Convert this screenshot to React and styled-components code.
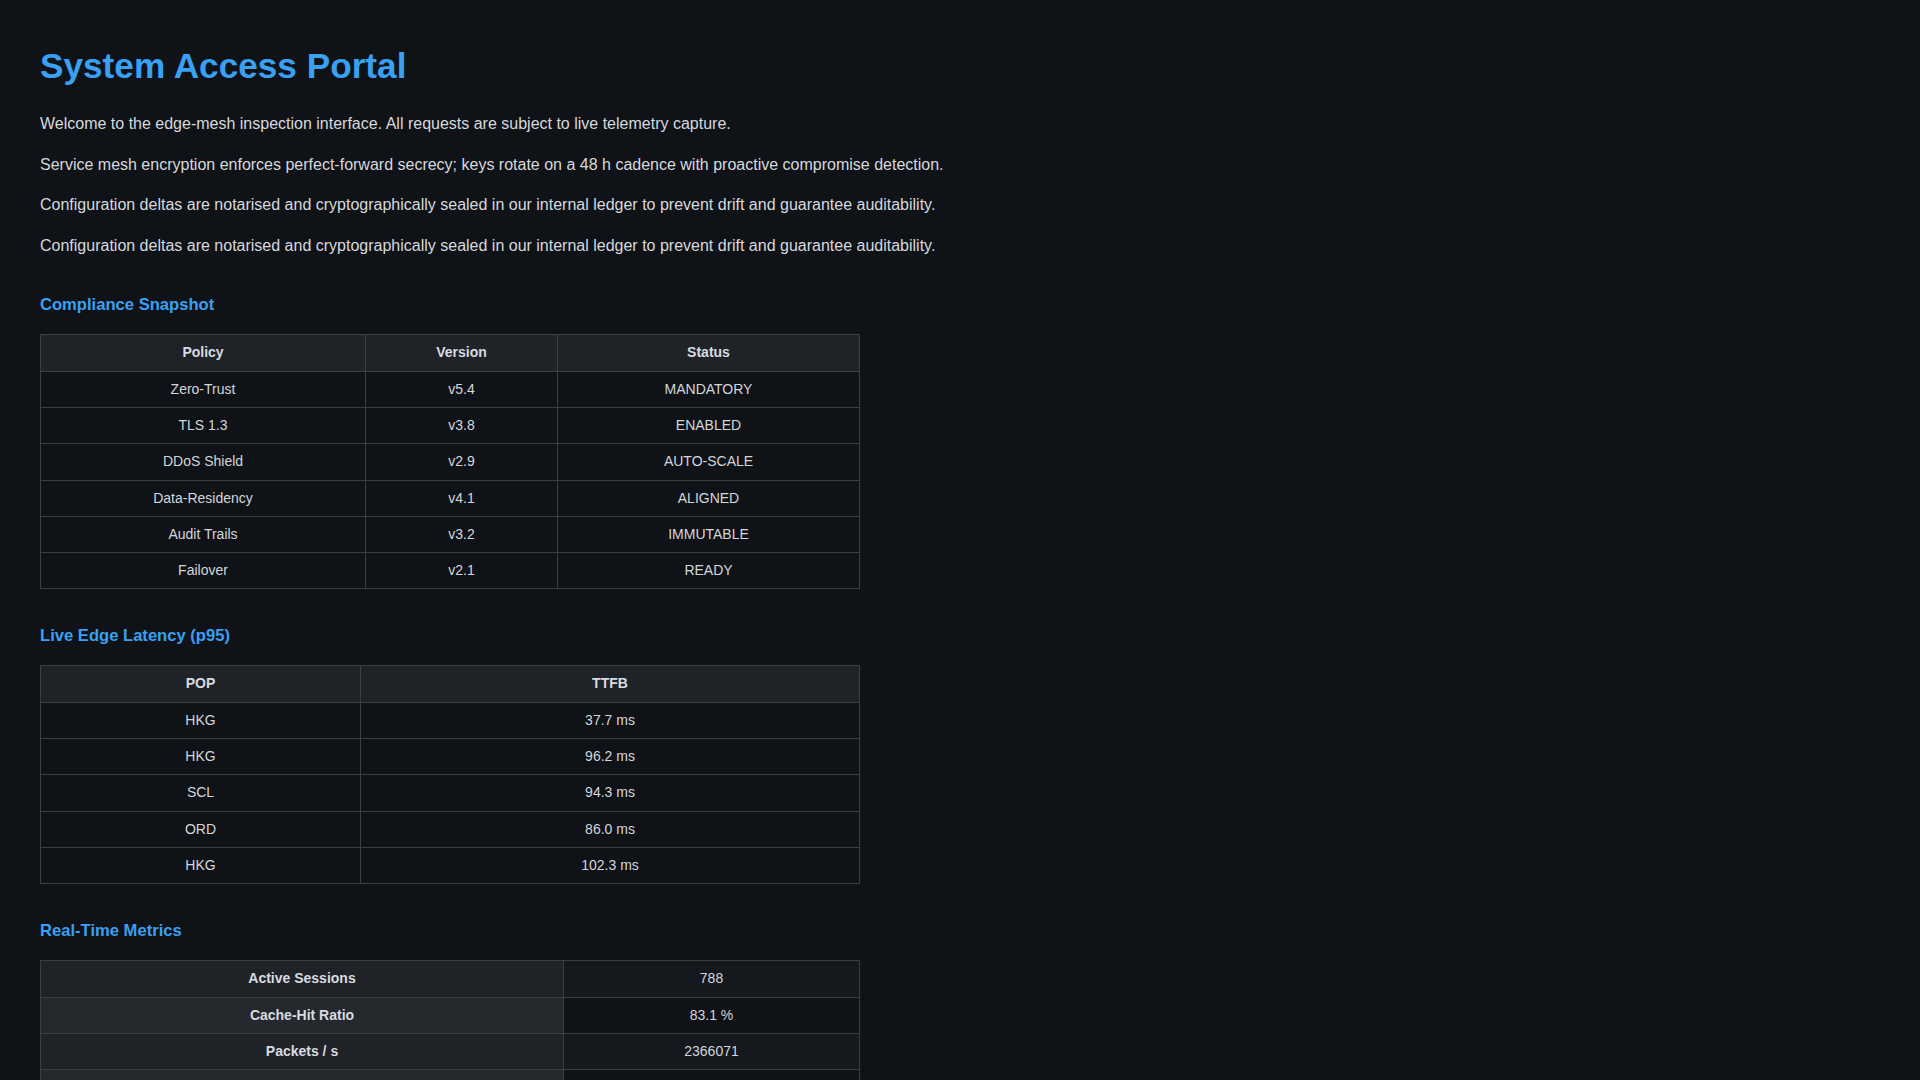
import React from "react";
import styled, { createGlobalStyle } from "styled-components";

const Global = createGlobalStyle`
  html, body { margin: 0; background: #0f1217; }
  body { font-family: "Liberation Sans", Arial, sans-serif; color: #d3d7dc; }
`;

const Page = styled.main`
  padding: 45px 40px 40px;
`;
const Title = styled.h1`
  margin: 0 0 25px;
  font-size: 35.2px;
  line-height: 42px;
  font-weight: 700;
  color: #3aa0f2;
`;
const P = styled.p`
  margin: 0 0 16px;
  font-size: 16px;
  line-height: 24.6px;
  color: #d6d9de;
`;
const H2 = styled.h2`
  margin: 36px 0 18px;
  font-size: 16.6px;
  line-height: 22px;
  font-weight: 700;
  color: #3aa0f2;
`;
const Table = styled.table`
  width: 820px;
  border-collapse: collapse;
  table-layout: fixed;
  font-size: 14px;
`;
const Th = styled.th`
  background: #1f2227;
  border: 1px solid #3b3e43;
  padding: 8px;
  line-height: 19.3px;
  font-weight: 700;
  color: #d8dbe0;
  text-align: center;
`;
const Td = styled.td`
  border: 1px solid #3b3e43;
  padding: 8px;
  line-height: 19.3px;
  text-align: center;
  color: #d3d7dc;
  background: ${p => (p.$alt ? "#15181d" : "transparent")};
`;
const RowTh = styled(Th)`
  background: ${p => (p.$alt ? "#25282d" : "#1f2227")};
`;

const compliance = [
  ["Zero-Trust", "v5.4", "MANDATORY"],
  ["TLS 1.3", "v3.8", "ENABLED"],
  ["DDoS Shield", "v2.9", "AUTO-SCALE"],
  ["Data-Residency", "v4.1", "ALIGNED"],
  ["Audit Trails", "v3.2", "IMMUTABLE"],
  ["Failover", "v2.1", "READY"],
];
const latency = [
  ["HKG", "37.7 ms"],
  ["HKG", "96.2 ms"],
  ["SCL", "94.3 ms"],
  ["ORD", "86.0 ms"],
  ["HKG", "102.3 ms"],
];
const metrics = [
  ["Active Sessions", "788"],
  ["Cache-Hit Ratio", "83.1 %"],
  ["Packets / s", "2366071"],
  ["Threats Blocked", "333"],
];

export default function App() {
  return (
    <Page>
      <Global />
      <Title>System Access Portal</Title>
      <P>Welcome to the edge-mesh inspection interface. All requests are subject to live telemetry capture.</P>
      <P>Service mesh encryption enforces perfect-forward secrecy; keys rotate on a 48 h cadence with proactive compromise detection.</P>
      <P>Configuration deltas are notarised and cryptographically sealed in our internal ledger to prevent drift and guarantee auditability.</P>
      <P>Configuration deltas are notarised and cryptographically sealed in our internal ledger to prevent drift and guarantee auditability.</P>

      <H2>Compliance Snapshot</H2>
      <Table>
        <colgroup>
          <col style={{ width: 325 }} />
          <col style={{ width: 192 }} />
          <col />
        </colgroup>
        <thead>
          <tr><Th>Policy</Th><Th>Version</Th><Th>Status</Th></tr>
        </thead>
        <tbody>
          {compliance.map((r, i) => (
            <tr key={i}>{r.map((c, j) => <Td key={j}>{c}</Td>)}</tr>
          ))}
        </tbody>
      </Table>

      <H2>Live Edge Latency (p95)</H2>
      <Table>
        <colgroup>
          <col style={{ width: 320 }} />
          <col />
        </colgroup>
        <thead>
          <tr><Th>POP</Th><Th>TTFB</Th></tr>
        </thead>
        <tbody>
          {latency.map((r, i) => (
            <tr key={i}>{r.map((c, j) => <Td key={j}>{c}</Td>)}</tr>
          ))}
        </tbody>
      </Table>

      <H2>Real-Time Metrics</H2>
      <Table>
        <colgroup>
          <col style={{ width: 523 }} />
          <col />
        </colgroup>
        <tbody>
          {metrics.map((r, i) => (
            <tr key={i}>
              <RowTh scope="row" $alt={i % 2 === 1}>{r[0]}</RowTh>
              <Td $alt={i % 2 === 0}>{r[1]}</Td>
            </tr>
          ))}
        </tbody>
      </Table>
    </Page>
  );
}
